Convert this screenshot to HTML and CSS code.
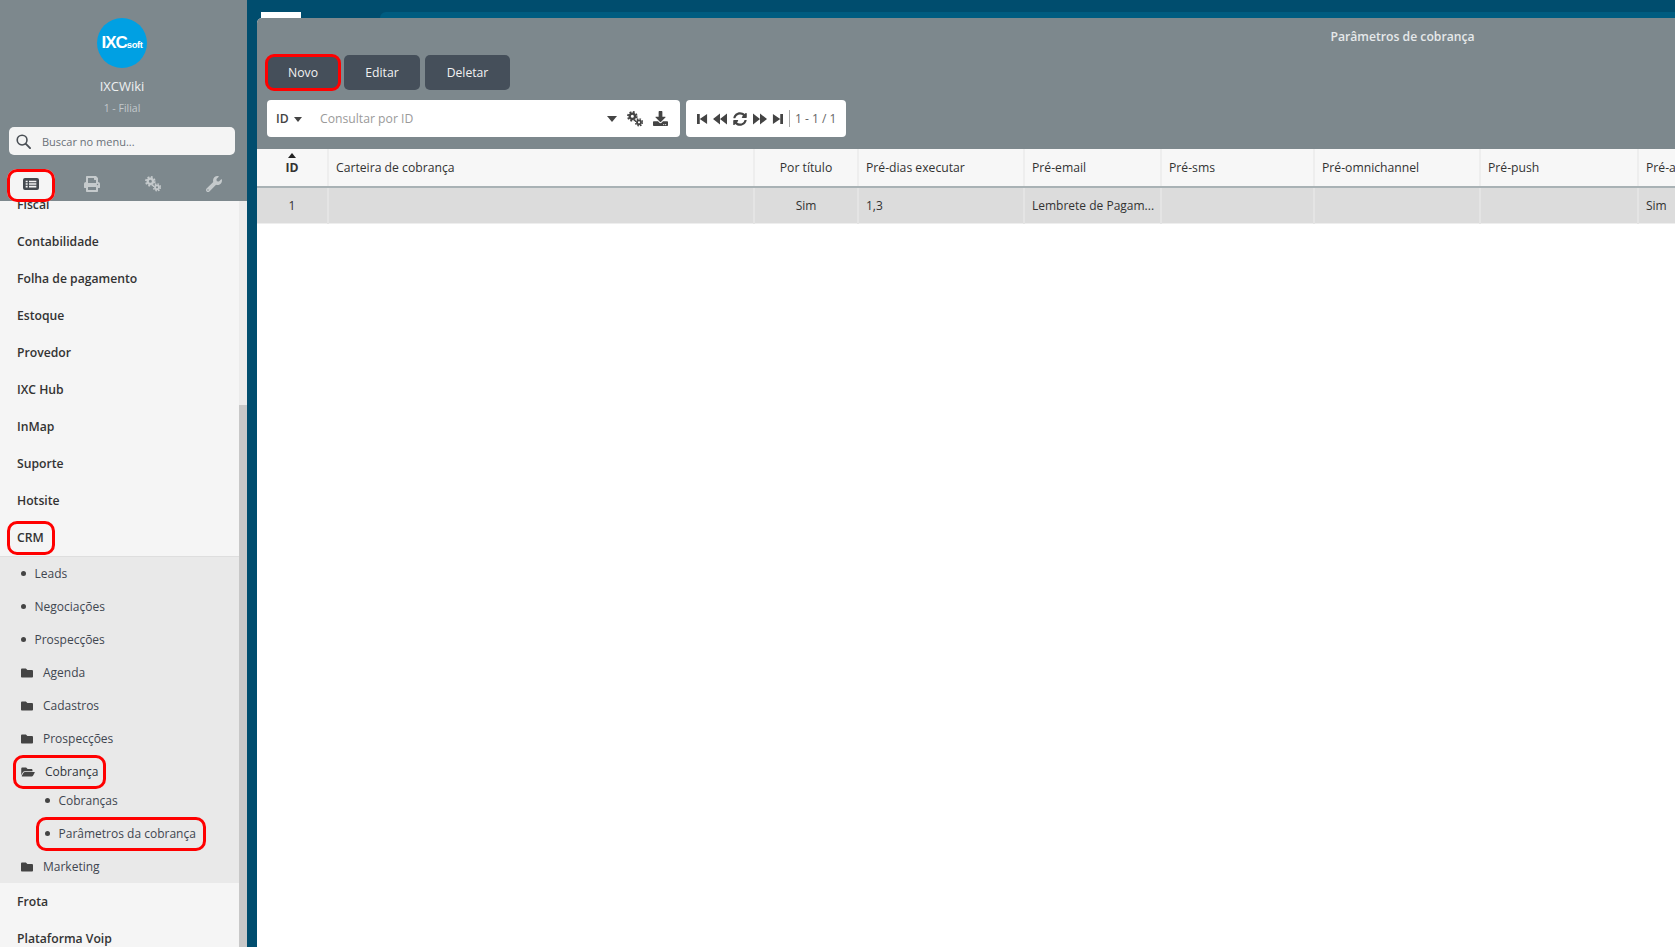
FILE: index.html
```html
<!DOCTYPE html>
<html>
<head>
    <title>Parâmetros de cobrança</title>
    <link rel="stylesheet" href="styles.css">
</head>
<body>
    <svg class="icon-defs">
        <symbol id="i-list" viewBox="0 0 24 20"><path fill-rule="evenodd" d="M3 1h18a3 3 0 0 1 3 3v12a3 3 0 0 1-3 3H3a3 3 0 0 1-3-3V4a3 3 0 0 1 3-3zM4 5v2.500h3V5zm5 0v2.500h11V5zM4 8.800v2.500h3V8.800zm5 0v2.500h11V8.800zM4 12.600v2.500h3v-2.500zm5 0v2.500h11v-2.500z"/></symbol>
        <symbol id="i-print" viewBox="0 0 512 512"><path d="M448 192V77.250c0-8.490-3.370-16.620-9.370-22.630L393.370 9.370c-6-6-14.140-9.370-22.630-9.370H96C78.330 0 64 14.330 64 32v160c-35.350 0-64 28.650-64 64v112c0 8.840 7.160 16 16 16h48v96c0 17.670 14.330 32 32 32h320c17.670 0 32-14.330 32-32v-96h48c8.840 0 16-7.160 16-16V256c0-35.350-28.650-64-64-64zm-64 256H128v-96h256v96zm0-224H128V64h192v48c0 8.840 7.160 16 16 16h48v96zm48 72c-13.250 0-24-10.750-24-24 0-13.260 10.750-24 24-24s24 10.740 24 24c0 13.250-10.750 24-24 24z"/></symbol>
        <symbol id="i-cogs" viewBox="0 0 24 24">
            <circle cx="8" cy="8" r="4" fill="none" stroke="currentColor" stroke-width="3.400"/>
            <circle cx="8" cy="8" r="6.600" fill="none" stroke="currentColor" stroke-width="2.600" stroke-dasharray="2.900 2.280"/>
            <circle cx="18" cy="17" r="3" fill="none" stroke="currentColor" stroke-width="2.800"/>
            <circle cx="18" cy="17" r="5.200" fill="none" stroke="currentColor" stroke-width="2.200" stroke-dasharray="2.300 1.800"/>
        </symbol>
        <symbol id="i-wrench" viewBox="0 0 512 512"><path d="M507.730 109.100c-2.240-9.030-13.540-12.090-20.120-5.510l-74.360 74.360-67.880-11.310-11.310-67.880 74.360-74.360c6.620-6.620 3.430-17.900-5.660-20.160-47.380-11.740-99.550.91-136.580 37.930-39.640 39.640-50.550 97.100-34.050 147.200L18.740 402.760c-24.990 24.990-24.990 65.510 0 90.500 24.990 24.990 65.510 24.990 90.500 0l213.210-213.210c50.120 16.710 107.470 5.680 147.370-34.220 37.070-37.070 49.700-89.320 37.910-136.730zM64 472c-13.250 0-24-10.750-24-24 0-13.260 10.750-24 24-24s24 10.740 24 24c0 13.250-10.750 24-24 24z"/></symbol>
        <symbol id="i-folder" viewBox="0 0 512 512"><path d="M464 128H272l-64-64H48C21.490 64 0 85.490 0 112v288c0 26.510 21.490 48 48 48h416c26.510 0 48-21.490 48-48V176c0-26.510-21.490-48-48-48z"/></symbol>
        <symbol id="i-folder-open" viewBox="0 0 576 512"><path d="M572.694 292.093L500.270 416.248A63.997 63.997 0 0 1 444.989 448H45.025c-18.523 0-30.064-20.093-20.731-36.093l72.424-124.155A64 64 0 0 1 152 256h399.964c18.523 0 30.064 20.093 20.730 36.093zM152 224h328v-48c0-26.510-21.490-48-48-48H272l-64-64H48C21.490 64 0 85.490 0 112v278.046l69.077-118.418C86.214 242.250 117.989 224 152 224z"/></symbol>
        <symbol id="i-download" viewBox="0 0 512 512"><path d="M216 0h80c13.300 0 24 10.700 24 24v168h87.700c17.800 0 26.700 21.500 14.100 34.100L269.700 378.300c-7.500 7.500-19.800 7.500-27.300 0L90.100 226.100c-12.600-12.600-3.700-34.100 14.100-34.100H192V24c0-13.300 10.700-24 24-24zm296 376v112c0 13.300-10.700 24-24 24H24c-13.300 0-24-10.700-24-24V376c0-13.300 10.700-24 24-24h146.700l49 49c20.100 20.100 52.500 20.100 72.600 0l49-49H488c13.300 0 24 10.700 24 24zm-124 88c0-11-9-20-20-20s-20 9-20 20 9 20 20 20 20-9 20-20zm64 0c0-11-9-20-20-20s-20 9-20 20 9 20 20 20 20-9 20-20z"/></symbol>
        <symbol id="i-sync" viewBox="0 0 512 512"><path d="M370.720 133.280C339.458 104.008 298.888 87.962 255.848 88c-77.458.068-144.328 53.178-162.791 126.850-1.344 5.363-6.122 9.150-11.651 9.150H24.103c-7.498 0-13.194-6.807-11.807-14.176C33.933 94.924 134.813 8 256 8c66.448 0 126.791 26.136 171.315 68.685L463.030 40.970C478.149 25.851 504 36.559 504 57.941V192c0 13.255-10.745 24-24 24H345.941c-21.382 0-32.090-25.851-16.971-40.971l41.750-41.749zM32 296h134.059c21.382 0 32.090 25.851 16.971 40.971l-41.750 41.750c31.262 29.273 71.835 45.319 114.876 45.280 77.418-.07 144.315-53.144 162.787-126.849 1.344-5.363 6.122-9.150 11.651-9.150h57.304c7.498 0 13.194 6.807 11.807 14.176C478.067 417.076 377.187 504 256 504c-66.448 0-126.791-26.136-171.315-68.685L48.970 471.030C33.851 486.149 8 475.441 8 454.059V320c0-13.255 10.745-24 24-24z"/></symbol>
        <symbol id="i-first" viewBox="0 0 12 12"><path d="M0 .5h3v11H0zM3 6l8-5.500v11z"/></symbol>
        <symbol id="i-prev" viewBox="0 0 14 12"><path d="M0 6l7-5.500v11zM7 6l7-5.500v11z"/></symbol>
        <symbol id="i-next" viewBox="0 0 14 12"><path d="M14 6L7 .5v11zM7 6L0 .5v11z"/></symbol>
        <symbol id="i-last" viewBox="0 0 12 12"><path d="M12 .5H9v11h3zM9 6L1 .5v11z"/></symbol>
        <symbol id="i-search" viewBox="0 0 16 16"><circle cx="6.500" cy="6.500" r="5.200" fill="none" stroke="currentColor" stroke-width="1.700"/><path d="M10.500 10.500L15 15" stroke="currentColor" stroke-width="2" stroke-linecap="round"/></symbol>
    </svg>

    <div class="app">
        <aside class="sidebar">
            <div class="profile">
                <div class="logo"><b>IXC</b><span>soft</span></div>
                <div class="company">IXCWiki</div>
                <div class="branch">1 - Filial</div>
                <div class="menu-search">
                    <svg class="search-icon"><use href="#i-search"/></svg>
                    <span>Buscar no menu...</span>
                </div>
                <div class="side-tabs">
                    <div class="side-tab active"><svg><use href="#i-list"/></svg></div>
                    <div class="side-tab"><svg><use href="#i-print"/></svg></div>
                    <div class="side-tab"><svg><use href="#i-cogs"/></svg></div>
                    <div class="side-tab"><svg><use href="#i-wrench"/></svg></div>
                </div>
            </div>
            <div class="menu-wrap">
                <div class="menu">
                    <div class="menu-item">Fiscal</div>
                    <div class="menu-item">Contabilidade</div>
                    <div class="menu-item">Folha de pagamento</div>
                    <div class="menu-item">Estoque</div>
                    <div class="menu-item">Provedor</div>
                    <div class="menu-item">IXC Hub</div>
                    <div class="menu-item">InMap</div>
                    <div class="menu-item">Suporte</div>
                    <div class="menu-item">Hotsite</div>
                    <div class="menu-item open"><span class="mark mark-crm">CRM</span></div>
                    <div class="submenu">
                        <div class="sub-item"><i class="dot"></i>Leads</div>
                        <div class="sub-item"><i class="dot"></i>Negociações</div>
                        <div class="sub-item"><i class="dot"></i>Prospecções</div>
                        <div class="sub-item"><svg class="folder"><use href="#i-folder"/></svg>Agenda</div>
                        <div class="sub-item"><svg class="folder"><use href="#i-folder"/></svg>Cadastros</div>
                        <div class="sub-item"><svg class="folder"><use href="#i-folder"/></svg>Prospecções</div>
                        <div class="sub-item sub-open">
                            <span class="mark mark-folder"><svg class="folder"><use href="#i-folder-open"/></svg>Cobrança</span>
                        </div>
                        <div class="sub-item nested first"><i class="dot"></i>Cobranças</div>
                        <div class="sub-item nested">
                            <span class="mark mark-leaf"><i class="dot"></i>Parâmetros da cobrança</span>
                        </div>
                        <div class="sub-item"><svg class="folder"><use href="#i-folder"/></svg>Marketing</div>
                    </div>
                    <div class="menu-item">Frota</div>
                    <div class="menu-item">Plataforma Voip</div>
                </div>
                <div class="scrollbar"><div class="scroll-thumb"></div></div>
            </div>
        </aside>

        <main class="content">
            <div class="topbar">
                <div class="tab-white"></div>
                <div class="tab-gap"></div>
                <div class="tab-strip"></div>
            </div>
            <div class="panel">
                <div class="panel-head">
                    <div class="panel-title">Parâmetros de cobrança</div>
                    <div class="actions">
                        <button class="btn btn-marked">Novo</button>
                        <button class="btn">Editar</button>
                        <button class="btn">Deletar</button>
                    </div>
                    <div class="filters">
                        <div class="box search-box">
                            <span class="field-select">ID <i class="caret"></i></span>
                            <span class="placeholder">Consultar por ID</span>
                            <i class="caret caret-right"></i>
                            <svg class="tool-cogs"><use href="#i-cogs"/></svg>
                            <svg class="tool-down"><use href="#i-download"/></svg>
                        </div>
                        <div class="box pager">
                            <svg class="pg-first"><use href="#i-first"/></svg>
                            <svg class="pg-double"><use href="#i-prev"/></svg>
                            <svg class="pg-sync"><use href="#i-sync"/></svg>
                            <svg class="pg-double"><use href="#i-next"/></svg>
                            <svg class="pg-first"><use href="#i-last"/></svg>
                            <span class="pg-count">1 - 1 / 1</span>
                        </div>
                    </div>
                </div>
                <table class="grid">
                    <colgroup>
                        <col class="c-id"><col class="c-wallet"><col class="c-title"><col class="c-days">
                        <col class="c-email"><col class="c-sms"><col class="c-omni"><col class="c-push"><col>
                    </colgroup>
                    <thead>
                        <tr>
                            <th class="center sorted">ID</th>
                            <th>Carteira de cobrança</th>
                            <th class="center">Por título</th>
                            <th>Pré-dias executar</th>
                            <th>Pré-email</th>
                            <th>Pré-sms</th>
                            <th>Pré-omnichannel</th>
                            <th>Pré-push</th>
                            <th>Pré-aviso</th>
                        </tr>
                    </thead>
                    <tbody>
                        <tr>
                            <td class="center">1</td>
                            <td></td>
                            <td class="center">Sim</td>
                            <td>1,3</td>
                            <td>Lembrete de Pagam...</td>
                            <td></td>
                            <td></td>
                            <td></td>
                            <td>Sim</td>
                        </tr>
                    </tbody>
                </table>
            </div>
        </main>
    </div>
</body>
</html>
```

FILE: styles.css
```css
* { box-sizing: border-box; }
html, body { height: 100%; }
body { margin: 0; font-family: "Open Sans", "Noto Sans", sans-serif; font-size: 12.200px; color: #333; background: #fff; overflow: hidden; }
.icon-defs { display: none; }

.app { display: flex; height: 947px; overflow: hidden; background: #004d6e; }

/* left menu */
.sidebar { width: 247px; flex: none; display: flex; flex-direction: column; overflow: hidden; background: #f5f5f5; }
.profile { height: 201px; flex: none; position: relative; z-index: 1; display: flex; flex-direction: column; align-items: center; padding: 18px 3px 0 0; background: #7d888d; }
.logo { width: 50px; height: 50px; border-radius: 50%; background: #00a0e3; color: #fff; display: flex; align-items: center; justify-content: center; font-family: "Liberation Sans", sans-serif; font-weight: bold; }
.logo b { font-size: 17px; letter-spacing: -1px; }
.logo span { font-size: 9.500px; letter-spacing: -.4px; margin-top: 3px; }
.company { margin-top: 9px; font-size: 13px; line-height: 18px; color: #eef0f1; }
.branch { margin-top: 6px; font-size: 10.500px; line-height: 15px; color: #c3c9cc; }
.menu-search { width: 226px; height: 28px; margin-top: 11px; padding-left: 7px; display: flex; align-items: center; gap: 11px; background: #f4f4f4; border-radius: 5px; font-size: 11px; color: #6a7178; }
.search-icon { width: 15px; height: 15px; color: #4a4f55; flex: none; }
.side-tabs { width: 100%; height: 46px; display: flex; align-items: flex-start; gap: 13px; padding: 14px 0 0 7px; }
.side-tab { width: 48px; height: 33px; padding-bottom: 3px; display: flex; align-items: center; justify-content: center; color: #c5cacc; }
.side-tab svg { width: 16px; height: 16px; fill: currentColor; }
.side-tab.active { background: #f5f5f5; color: #454a50; outline: 3px solid #f00; outline-offset: -3px; border-radius: 10px; }

.menu-wrap { flex: 1; position: relative; overflow: hidden; }
.menu { width: 239px; margin-top: -15px; }
.menu-item { height: 37px; display: flex; align-items: center; padding-left: 17px; font-weight: 600; font-size: 12.200px; color: #333; }
.menu-item.open { height: 38px; border-bottom: 1px solid #dedede; }
.submenu { background: #e9e9e9; }
.sub-item { height: 33px; display: flex; align-items: center; padding-left: 21px; font-size: 12px; color: #3f4650; white-space: nowrap; }
.sub-open { padding-left: 13px; color: #2f343a; }
.nested { padding-left: 36px; }
.nested.first { margin-top: -4px; padding-left: 45px; }
.dot { width: 5px; height: 5px; margin-right: 8.500px; border-radius: 50%; background: #444; flex: none; }
.folder { width: 12px; height: 12px; margin-right: 10px; fill: #444; flex: none; }
.mark { display: inline-flex; align-items: center; height: 34px; border: 3px solid #f00; border-radius: 10px; }
.mark-crm { width: 48px; margin-left: -10px; padding-left: 7px; }
.mark-folder { width: 93px; padding-left: 5px; }
.mark-folder .folder { width: 14px; }
.mark-leaf { width: 170px; padding-left: 6px; }
.scrollbar { position: absolute; top: 0; right: 0; bottom: 0; width: 8px; background: #ebebeb; }
.scroll-thumb { height: 542px; margin-top: 204px; background: #c8c8c8; }

/* main area */
.content { flex: 1; min-width: 0; padding-left: 10px; overflow: hidden; }
.topbar { height: 18px; padding-top: 12px; padding-left: 4px; display: flex; }
.tab-white { width: 40px; background: #fff; }
.tab-gap { width: 79px; }
.tab-strip { flex: 1; background: #005c80; border-radius: 8px 0 0 0; }
.panel { width: 2282px; height: 929px; background: #fff; border-radius: 5px 5px 0 0; overflow: hidden; }
.panel-head { height: 131px; padding: 0 0 0 9px; background: #7d888d; }
.panel-title { height: 37px; padding-top: 10px; text-align: center; font-size: 12.200px; font-weight: 600; line-height: 18px; color: #e6e9ea; }
.actions { display: flex; gap: 4px; }
.btn { height: 35px; padding: 0 0 1px; border: 0; border-radius: 5px; background: #454f5a; color: #f2f2f2; font-family: inherit; font-size: 12.200px; font-weight: 500; width: 76px; }
.btn + .btn + .btn { width: 85px; margin-left: 1px; }
.btn-marked { width: 74px; outline: 3px solid #f00; outline-offset: -2px; border-radius: 8px; }
.filters { display: flex; gap: 6px; margin-top: 10px; margin-left: 1px; }
.box { height: 37px; display: flex; align-items: center; background: #fff; border-radius: 4px; }
.search-box { width: 413px; padding: 0 12px 0 9px; }
.field-select { width: 44px; font-weight: 600; font-size: 12.200px; color: #444; }
.placeholder { flex: 1; color: #9a9a9a; font-size: 12.200px; }
.caret { display: inline-block; width: 0; height: 0; margin-left: 2px; vertical-align: middle; border-left: 4.500px solid transparent; border-right: 4.500px solid transparent; border-top: 5px solid #444; }
.caret-right { margin-right: 10px; border-left-width: 5px; border-right-width: 5px; border-top-width: 6px; }
.tool-cogs { width: 16px; height: 16px; color: #444; margin-right: 10px; }
.tool-down { width: 15px; height: 15px; fill: #444; }
.pager { width: 160px; padding-left: 11px; gap: 5px; fill: #444; color: #444; }
.pager svg { flex: none; }
.pg-first { width: 11px; height: 12px; }
.pg-double { width: 14px; height: 12px; }
.pg-sync { width: 14px; height: 14px; margin: 0 1px; }
.pg-count { margin-left: 1px; padding-left: 5px; border-left: 1px solid #aaa; font-size: 12px; line-height: 17px; color: #666; }

/* grid */
.grid { width: 2282px; table-layout: fixed; border-collapse: collapse; font-size: 12.200px; }
.c-id { width: 71px; }
.c-wallet { width: 426px; }
.c-title { width: 104px; }
.c-days { width: 166px; }
.c-email { width: 137px; }
.c-sms { width: 153px; }
.c-omni { width: 166px; }
.c-push { width: 158px; }
.grid th { position: relative; height: 38px; padding: 0 7px; text-align: left; font-weight: 400; color: #333; background: #f7f7f7; border-right: 2px solid #eee; border-bottom: 2px solid #a9b2b5; }
.grid td { height: 36px; padding: 0 7px; font-size: 12px; color: #333; background: #dcdcdc; border-right: 2px solid #e4e4e4; border-bottom: 1px solid #eee; white-space: nowrap; overflow: hidden; }
.grid .center { text-align: center; }
.grid th.sorted { font-weight: 700; }
.sorted::before { content: ""; position: absolute; top: 4px; left: 50%; margin-left: -4px; border-left: 4px solid transparent; border-right: 4px solid transparent; border-bottom: 5px solid #222; }
```
